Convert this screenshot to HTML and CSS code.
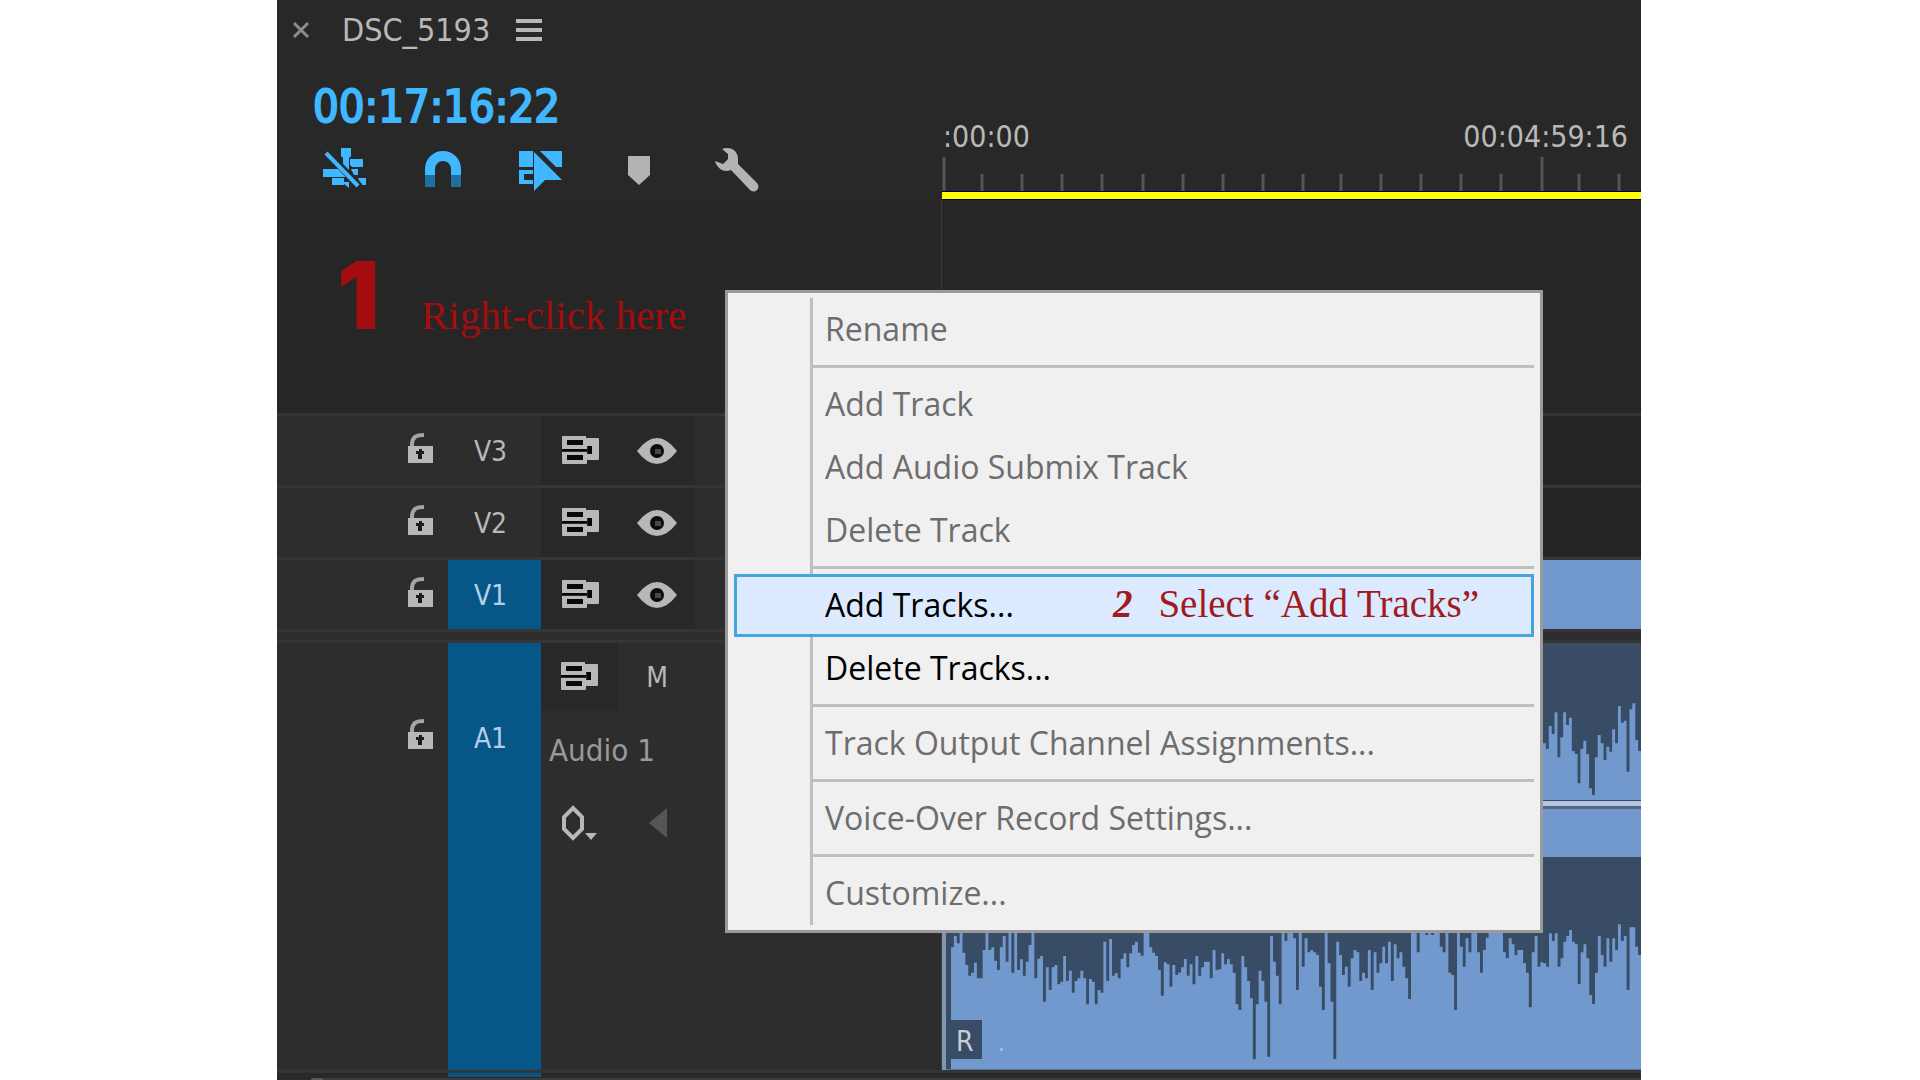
FILE: index.html
```html
<!DOCTYPE html>
<html lang="en">
<head>
<meta charset="utf-8">
<title>DSC_5193</title>
<link rel="stylesheet" href="styles.css">
</head>
<body>
<svg class="defs" aria-hidden="true">
  <symbol id="lock" viewBox="0 0 28 32">
    <path d="M6 16V11C7 5 10 3 18 3" fill="none" stroke="#a4a4a4" stroke-width="4"/>
    <path d="M2 14h25v17H2z" fill="#b8b8b8"/>
    <path d="M10 19h3v-2h3v2h2v3h-2v5h-4v-5h-2z" fill="#1c1c1c"/>
  </symbol>
  <symbol id="sync" viewBox="0 0 40 32">
    <path fill-rule="evenodd" d="M2 1H25V3H37Q38 3 38 4V24Q38 25 37 25H26V28Q26 29 25 29H2Q1 29 1 28V17H26V19H31V11H26V14H1V2Q1 1 2 1zM6 5V10H22V5zM6 20V25H22V20z" fill="#b8b8b8"/>
    <path d="M6 5H22V10H6zM6 20H22V25H6zM27 11H31V19H27zM1 14H26V16H1z" fill="#080808"/>
  </symbol>
  <symbol id="eye" viewBox="0 0 40 28">
    <path d="M0 14Q20 -12 40 14Q20 40 0 14z" fill="#b8b8b8"/>
    <circle cx="20" cy="14" r="7" fill="#0c0c0c"/>
    <path d="M18 12h6v5h-6z" fill="#484848"/>
  </symbol>
</svg>
<main class="panel">
  <section class="top">
    <div class="controls">
      <div class="tab">
        <button class="icon" aria-label="Close"><svg width="18" height="18" viewBox="0 0 18 18"><path d="M2 2L16 16M16 2L2 16" stroke="#8c8c8c" stroke-width="3"/></svg></button>
        <h1 class="name">DSC_5193</h1>
        <button class="icon" aria-label="Panel menu"><svg width="26" height="26" viewBox="0 0 26 26"><path d="M0 4H26M0 13H26M0 22H26" stroke="#b8b8b8" stroke-width="4"/></svg></button>
      </div>
      <div class="timecode">00:17:16:22</div>
      <div class="tools">
        <button class="icon tool" aria-label="Insert as nest"><svg width="46" height="46" viewBox="0 0 46 46"><g fill="#3fb8ff"><path d="M19 2h10v8l-2 2v12h-6V12l-2-2zM28 13h13v8H30l-2-2zM1 23h19l6 8H1zM29 23h7v6h-4zM10 32h12v7H10zM22 36h5v6l-5-4zM36 32h8v7h-5z"/></g><path d="M4 5L38 41" stroke="#282828" stroke-width="7"/><path d="M4 7L36 40" stroke="#3fb8ff" stroke-width="4"/></svg></button>
        <button class="icon tool" aria-label="Snap"><svg width="46" height="46" viewBox="0 0 46 46"><path d="M10 30V23A13 13 0 0 1 36 23V30" fill="none" stroke="#3fb8ff" stroke-width="10"/><path d="M10 29V41M36 29V41" stroke="#1f6f9f" stroke-width="10"/></svg></button>
        <button class="icon tool" aria-label="Linked selection"><svg width="46" height="46" viewBox="0 0 46 46"><path d="M1 5h14v16H1zM22 5h22v16h-6zM1 24h14v4H6v6h9v4H1z" fill="#3fb8ff"/><path d="M16 6V45L27 34H44z" fill="#3fb8ff"/><path d="M19 5L41 27" stroke="#282828" stroke-width="2"/></svg></button>
        <button class="icon tool" aria-label="Add marker"><svg width="46" height="46" viewBox="0 0 46 46"><path d="M12 11Q12 10 13 10H33Q34 10 34 11V29L23 39L12 29z" fill="#b3b3b3"/></svg></button>
        <button class="icon tool" aria-label="Timeline display settings"><svg width="46" height="46" viewBox="0 0 46 46"><path d="M8 3C17 0 24 5 24 13V18L43 37Q46 41 43 44Q40 47 36 44L17 24C9 27 3 22 1 15L9 18L14 13V8z" fill="#b3b3b3"/></svg></button>
      </div>
    </div>
    <div class="ruler">
      <div class="labels"><span>:00:00</span><span>00:04:59:16</span></div>
      <svg class="ticks" height="34" aria-hidden="true"><path d="M2 0V34M600 0V34M40 17V34M80 17V34M120 17V34M160 17V34M201 17V34M241 17V34M281 17V34M321 17V34M361 17V34M399 17V34M439 17V34M479 17V34M519 17V34M559 17V34M637 17V34M677 17V34" stroke="#555" stroke-width="3"/></svg>
      <div class="workarea"></div>
    </div>
  </section>

  <section class="row free">
    <div class="head note-one"><span class="num-one">1</span><span class="hint">Right-click here</span></div>
    <div class="lane"></div>
  </section>
  <section class="row video">
    <div class="head">
      <button class="icon lock" aria-label="Lock V3"><svg width="28" height="32"><use href="#lock"/></svg></button>
      <button class="target">V3</button>
      <div class="switches"><button class="icon" aria-label="Sync lock"><svg width="40" height="32"><use href="#sync"/></svg></button><button class="icon" aria-label="Toggle output"><svg width="40" height="28"><use href="#eye"/></svg></button></div>
    </div>
    <div class="lane"></div>
  </section>
  <section class="row video">
    <div class="head">
      <button class="icon lock" aria-label="Lock V2"><svg width="28" height="32"><use href="#lock"/></svg></button>
      <button class="target">V2</button>
      <div class="switches"><button class="icon" aria-label="Sync lock"><svg width="40" height="32"><use href="#sync"/></svg></button><button class="icon" aria-label="Toggle output"><svg width="40" height="28"><use href="#eye"/></svg></button></div>
    </div>
    <div class="lane"></div>
  </section>
  <section class="row video">
    <div class="head">
      <button class="icon lock" aria-label="Lock V1"><svg width="28" height="32"><use href="#lock"/></svg></button>
      <button class="target on">V1</button>
      <div class="switches"><button class="icon" aria-label="Sync lock"><svg width="40" height="32"><use href="#sync"/></svg></button><button class="icon" aria-label="Toggle output"><svg width="40" height="28"><use href="#eye"/></svg></button></div>
    </div>
    <div class="lane"><div class="clip"></div></div>
  </section>
  <div class="divider"></div>
  <section class="row audio">
    <div class="head">
      <button class="icon lock" aria-label="Lock A1"><svg width="28" height="32"><use href="#lock"/></svg></button>
      <button class="target on">A1</button>
      <div class="audio-tools">
        <div class="pair"><button class="icon box" aria-label="Sync lock"><svg width="40" height="32"><use href="#sync"/></svg></button><button class="icon mute">M</button></div>
        <div class="track-name">Audio 1</div>
        <div class="pair"><button class="icon box plain" aria-label="Keyframes"><svg width="40" height="38" viewBox="0 0 40 38"><path d="M13 4L22 13V25L13 34L4 25V13z" fill="none" stroke="#b8b8b8" stroke-width="4"/><path d="M25 29H37L31 36z" fill="#b8b8b8"/></svg></button><button class="icon prev" aria-label="Previous keyframe"><svg width="18" height="30" viewBox="0 0 18 30"><path d="M18 0V30L0 15z" fill="#555"/></svg></button></div>
      </div>
    </div>
    <div class="lane">
      <div class="audio-clip">
        <div class="channel left"><svg class="wave" viewBox="0 0 293 471" preserveAspectRatio="none"><path id="wave-left" fill="#7299cd"/></svg></div>
        <div class="split"></div>
        <div class="channel right"><svg class="wave" viewBox="0 0 2070 636" preserveAspectRatio="none"><path id="wave-right" fill="#7299cd"/></svg><span class="badge">R</span><span class="dot"></span></div>
      </div>
    </div>
  </section>
  <div class="bottom"><span class="cap"></span><div class="scroll"><div class="edge"></div></div></div>

  <div class="menu" role="menu">
    <div class="items">
      <button class="item" role="menuitem" disabled>Rename</button>
      <hr class="sep">
      <button class="item" role="menuitem" disabled>Add Track</button>
      <button class="item" role="menuitem" disabled>Add Audio Submix Track</button>
      <button class="item" role="menuitem" disabled>Delete Track</button>
      <hr class="sep">
      <button class="item active" role="menuitem"><span>Add Tracks...</span><span class="note-two"><b class="num-two">2</b>Select “Add Tracks”</span></button>
      <button class="item" role="menuitem">Delete Tracks...</button>
      <hr class="sep">
      <button class="item" role="menuitem" disabled>Track Output Channel Assignments...</button>
      <hr class="sep">
      <button class="item" role="menuitem" disabled>Voice-Over Record Settings...</button>
      <hr class="sep">
      <button class="item" role="menuitem" disabled>Customize...</button>
    </div>
  </div>
</main>
<script src="waveform.js"></script>
</body>
</html>
```
FILE: styles.css
```css
* { box-sizing: border-box; }
body { margin: 0; background: #fff; font-family: "DejaVu Sans Condensed", "DejaVu Sans", sans-serif; color: #b8b8b8; }
button { margin: 0; padding: 0; border: 0; background: none; font: inherit; color: inherit; text-align: left; }
svg { display: block; flex: none; }
.defs { position: absolute; width: 0; height: 0; }

.panel { position: relative; display: flex; flex-direction: column; min-height: 100vh; margin: 0 279px 0 277px; background: #282828; overflow: hidden; }
.top { display: grid; grid-template-columns: 665px 1fr; height: 200px; }
.tab { display: flex; align-items: center; height: 60px; padding-left: 15px; }
.name { margin: 0 26px 0 32px; font-size: 32px; font-weight: 400; line-height: 58px; }
.timecode { padding-left: 36px; font-size: 45px; line-height: 94px; height: 86px; color: #3fb8ff; -webkit-text-stroke: 2px #3fb8ff; }
.tools { display: flex; padding-left: 19px; }
.icon { display: flex; align-items: center; justify-content: center; }
.tool { width: 98px; height: 46px; }

.ruler { display: flex; flex-direction: column; justify-content: flex-end; overflow: hidden; }
.labels { display: flex; justify-content: space-between; padding: 0 13px 0 1px; font-size: 30px; line-height: 40px; }
.ticks { width: 100%; }
.workarea { height: 9px; background: #ff0; border-top: 1px solid #00002c; border-bottom: 1px solid #00002c; }

.row { display: grid; grid-template-columns: 665px 1fr; }
.head { display: flex; border-right: 1px solid #3a3a3a; min-width: 0; }
.lane { min-width: 0; background: #242424; }
.free { height: 213px; background: #262626; }
.free .lane { background: none; }
.note-one { align-items: baseline; padding: 39px 0 0 60px; color: #a30d0f; }
.num-one { width: 84px; font: 900 94px/112px Inter, sans-serif; }
.hint { font: 41px/48px "Liberation Serif", serif; }
.video { height: 72px; border-top: 3px solid #353535; }
.video .head, .audio .head { background: #2d2d2d; }
.head .lock { width: 171px; justify-content: flex-end; padding: 0 14px 6px 0; }
.target { width: 93px; padding: 2px 8px 0 0; text-align: center; font-size: 28px; }
.target.on { background: #065788; color: #b4cfe6; }
.switches { display: flex; align-items: center; gap: 36px; width: 154px; padding-left: 20px; background: #282828; }
.clip { height: 100%; background: #7299cd; }
.divider { height: 14px; background: #2d2d2d; border-top: 3px solid #353535; border-bottom: 3px solid #353535; }
.audio { flex: 1; min-height: 425px; }
.audio .lock { padding-bottom: 246px; }
.audio .target { padding-bottom: 239px; }
.audio-tools { flex: 1; }
.pair { display: flex; align-items: center; height: 68px; }
.box { width: 77px; height: 68px; background: #282828; }
.plain { background: none; }
.mute { width: 78px; font-size: 28px; }
.prev { width: 80px; }
.track-name { padding: 0 8px; height: 78px; font-size: 31px; line-height: 78px; color: #999; }
.audio-clip { display: flex; flex-direction: column; height: 100%; background: #384c66; border-left: 4px solid #8296b0; }
.channel { display: flex; justify-content: flex-end; min-width: 0; }
.left { height: 158px; }
.left .wave { width: 98px; height: 157px; }
.split { height: 56px; background: linear-gradient(#b4c6e4 5px, #55677f 5px 8px, #7299cd 8px); }
.right { position: relative; flex: 1; border-bottom: 1px solid #52749f; }
.right .wave { width: calc(100% - 5px); height: 100%; }
.badge { position: absolute; left: 4px; bottom: 10px; width: 32px; height: 39px; padding-left: 6px; background: #384c66; font-size: 28px; line-height: 43px; color: #c4cfd8; }
.dot { position: absolute; left: 54px; bottom: 18px; width: 3px; height: 3px; background: #8ec4e8; }
.bottom { display: flex; align-items: flex-end; height: 12px; border-top: 3px solid #343434; background: linear-gradient(#065788, #065788) 171px 0 / 93px 4px no-repeat #292929; }
.cap { width: 34px; }
.scroll { flex: 1; height: 4px; background: #3c3c3c; border-radius: 4px 0 0 0; }
.edge { width: 12px; height: 4px; border-radius: 4px; background: #5a5a5a; }

.menu { position: absolute; left: 448px; right: 98px; top: 290px; padding: 5px 6px; background: #f0f0f0; border: 3px solid #9a9a9a; font-family: "Open Sans", sans-serif; }
.items { display: flex; flex-direction: column; background: linear-gradient(#bfbfbf, #bfbfbf) 76px 0 / 3px 100% no-repeat; }
.item { display: flex; align-items: center; height: 63px; padding: 0 0 2px 91px; font-size: 32px; color: #000; white-space: nowrap; }
.item:disabled { color: #6d6d6d; }
.active { justify-content: space-between; background: #dbeafe; border: 3px solid #46a5e0; padding: 0 52px 2px 88px; }
.note-two { padding-bottom: 2px; font: 39px/48px "Liberation Serif", serif; color: #a01a1e; }
.num-two { margin-right: 26px; font-style: italic; }
.sep { margin: 4px 0 5px 79px; border: 0; height: 3px; background: #bfbfbf; }
```
FILE: waveform.js
```js
// Depth of the quiet area above the waveform, one value per sample.
const left = [301,318,249,273,208,343,283,208,246,224,324,333,421,318,293,334,436,456,343,276,301,351,311,326,259,301,189,239,233,386,199,181,291,324];
const right = [262,228,250,215,278,315,347,338,308,355,355,270,215,270,262,302,330,262,228,305,215,338,215,330,298,347,305,255,215,355,296,288,425,322,390,322,315,373,365,288,363,332,398,363,355,332,355,433,357,365,433,390,398,245,363,237,347,340,355,297,280,322,280,255,245,278,287,215,215,262,278,288,330,407,307,313,380,315,345,338,322,297,347,313,373,288,347,322,305,305,355,270,330,328,280,313,297,313,338,433,450,288,322,363,415,598,433,332,363,425,590,228,305,347,433,215,243,215,215,235,390,215,
320,235,277,270,277,285,380,450,215,310,425,597,245,285,345,320,380,295,270,277,363,338,355,270,390,277,338,310,260,310,245,363,253,295,277,320,355,417,215,215,277,215,215,225,215,225,215,215,260,277,215,338,345,450,215,260,320,235,277,215,215,277,338,270,233,215,215,215,215,215,277,295,235,253,285,270,270,310,338,442,277,228,320,307,310,320,220,243,220,320,295,245,228,210,245,253,372,277,253,295,405,432,338,228,285,320,235,305,235,270,193,243,228,390,202,202,260,285];

function draw(id, samples, width, height, offset) {
  const step = width / samples.length;
  let d = `M0 ${height}`;
  samples.forEach((v, i) => {
    d += `V${v + offset}H${((i + 1) * step).toFixed(1)}`;
  });
  document.getElementById(id).setAttribute("d", d + `V${height}Z`);
}

draw("wave-left", left, 293, 471, 0);
draw("wave-right", right, 2070, 636, 9);
```
